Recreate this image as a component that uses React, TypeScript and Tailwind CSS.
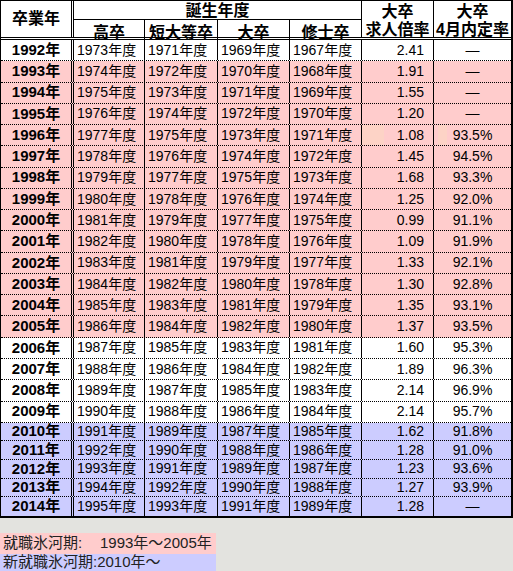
import React from "react";

type Row = {
  y: string;
  a: string;
  b: string;
  c: string;
  d: string;
  r: string;
  n: string;
  t: "w" | "p" | "b";
};

const raw: [string, string, string, string, string, string, string, "w" | "p" | "b"][] = [
  ["1992", "1973", "1971", "1969", "1967", "2.41", "—", "w"],
  ["1993", "1974", "1972", "1970", "1968", "1.91", "—", "p"],
  ["1994", "1975", "1973", "1971", "1969", "1.55", "—", "p"],
  ["1995", "1976", "1974", "1972", "1970", "1.20", "—", "p"],
  ["1996", "1977", "1975", "1973", "1971", "1.08", "93.5%", "p"],
  ["1997", "1978", "1976", "1974", "1972", "1.45", "94.5%", "p"],
  ["1998", "1979", "1977", "1975", "1973", "1.68", "93.3%", "p"],
  ["1999", "1980", "1978", "1976", "1974", "1.25", "92.0%", "p"],
  ["2000", "1981", "1979", "1977", "1975", "0.99", "91.1%", "p"],
  ["2001", "1982", "1980", "1978", "1976", "1.09", "91.9%", "p"],
  ["2002", "1983", "1981", "1979", "1977", "1.33", "92.1%", "p"],
  ["2003", "1984", "1982", "1980", "1978", "1.30", "92.8%", "p"],
  ["2004", "1985", "1983", "1981", "1979", "1.35", "93.1%", "p"],
  ["2005", "1986", "1984", "1982", "1980", "1.37", "93.5%", "p"],
  ["2006", "1987", "1985", "1983", "1981", "1.60", "95.3%", "w"],
  ["2007", "1988", "1986", "1984", "1982", "1.89", "96.3%", "w"],
  ["2008", "1989", "1987", "1985", "1983", "2.14", "96.9%", "w"],
  ["2009", "1990", "1988", "1986", "1984", "2.14", "95.7%", "w"],
  ["2010", "1991", "1989", "1987", "1985", "1.62", "91.8%", "b"],
  ["2011", "1992", "1990", "1988", "1986", "1.28", "91.0%", "b"],
  ["2012", "1993", "1991", "1989", "1987", "1.23", "93.6%", "b"],
  ["2013", "1994", "1992", "1990", "1988", "1.27", "93.9%", "b"],
  ["2014", "1995", "1993", "1991", "1989", "1.28", "—", "b"],
];

const rows: Row[] = raw.map(([y, a, b, c, d, r, n, t]) => ({ y, a, b, c, d, r, n, t }));

const FONT = '"Liberation Sans", "Noto Sans CJK JP", sans-serif';

function DataRow({ row, idx }: { row: Row; idx: number }) {
  const bg = row.t === "p" ? "bg-[#ffcccc]" : row.t === "b" ? "bg-[#ccccff]" : "bg-white";
  const last = idx === rows.length - 1;
  const tall = row.t !== "b";
  const special = row.y === "1996";
  return (
    <div
      className={`flex ${bg} ${tall ? "h-[21.28px]" : last ? "h-[18.6px]" : "h-[18.6px] border-b border-dotted border-black"} ${
        tall ? "border-b border-dotted border-black" : ""
      }`}
    >
      <div className="flex w-[73px] shrink-0 items-center justify-center border-r-[3px] border-double border-black text-[15px] font-bold">
        {row.y}年
      </div>
      <div className="flex w-[71px] shrink-0 items-center border-r border-black pl-[3px] text-[14px]">{row.a}年度</div>
      <div className="flex w-[73px] shrink-0 items-center border-r border-black pl-[3px] text-[14px]">{row.b}年度</div>
      <div className="flex w-[72px] shrink-0 items-center border-r border-black pl-[3px] text-[14px]">{row.c}年度</div>
      <div className="flex w-[72px] shrink-0 items-center border-r border-black pl-[3px] text-[14px]">{row.d}年度</div>
      <div
        className={`flex w-[72px] shrink-0 items-center justify-end border-r border-black pr-[9px] text-[14px] ${
          special ? "bg-[linear-gradient(to_right,#fdd3c6_0,#fdd3c6_22px,transparent_22px)]" : ""
        }`}
      >
        {row.r}
      </div>
      <div
        className={`flex flex-1 items-center justify-center text-[14px] ${
          special ? "bg-[linear-gradient(to_right,transparent_0,transparent_4px,#fdd3c6_4px,#fdd3c6_13px,transparent_13px)]" : ""
        }`}
      >
        {row.n}
      </div>
    </div>
  );
}

export default function App() {
  return (
    <div className="min-h-[571px] w-[513px] bg-[#e3e3df] text-black" style={{ fontFamily: FONT }}>
      <div className="w-[513px] border-l border-t border-r-2 border-b-2 border-black bg-white">
        {/* header */}
        <div className="flex h-[39px] border-b-[3px] border-black [border-bottom-style:double]">
          <div className="flex w-[73px] shrink-0 items-center justify-center border-r-[3px] border-double border-black text-[16px] font-bold">
            卒業年
          </div>
          <div className="flex w-[288px] shrink-0 flex-col border-r border-black">
            <div className="flex h-[19px] items-center justify-center border-b border-black pt-[1px] text-[16px] font-bold">
              誕生年度
            </div>
            <div className="flex flex-1">
              <div className="flex w-[71px] shrink-0 items-center justify-center border-r border-black pt-[1px] text-[16px] font-bold">
                高卒
              </div>
              <div className="flex w-[73px] shrink-0 items-center justify-center border-r border-black pt-[1px] text-[16px] font-bold">
                短大等卒
              </div>
              <div className="flex w-[72px] shrink-0 items-center justify-center border-r border-black pt-[1px] text-[16px] font-bold">
                大卒
              </div>
              <div className="flex flex-1 items-center justify-center pt-[1px] text-[16px] font-bold">修士卒</div>
            </div>
          </div>
          <div className="flex w-[72px] shrink-0 flex-col items-center justify-center border-r border-black pt-[4px] text-[16px] font-bold leading-[18px]">
            <span>大卒</span>
            <span className="whitespace-nowrap">求人倍率</span>
          </div>
          <div className="flex flex-1 flex-col items-center justify-center pt-[4px] text-[16px] font-bold leading-[18px]">
            <span>大卒</span>
            <span className="whitespace-nowrap">4月内定率</span>
          </div>
        </div>
        {rows.map((r, i) => (
          <DataRow key={r.y} row={r} idx={i} />
        ))}
      </div>
      <div className="mt-[15px] w-[216px] text-[15px] text-[#222]">
        <div className="flex h-[21px] items-center bg-[#ffcccc] pl-[3px]">
          <span className="inline-block w-[97px]">就職氷河期:</span>
          <span>1993年～2005年</span>
        </div>
        <div className="flex h-[17px] items-center bg-[#ccccff] pl-[3px]">
          <span>新就職氷河期:2010年～</span>
        </div>
      </div>
    </div>
  );
}
